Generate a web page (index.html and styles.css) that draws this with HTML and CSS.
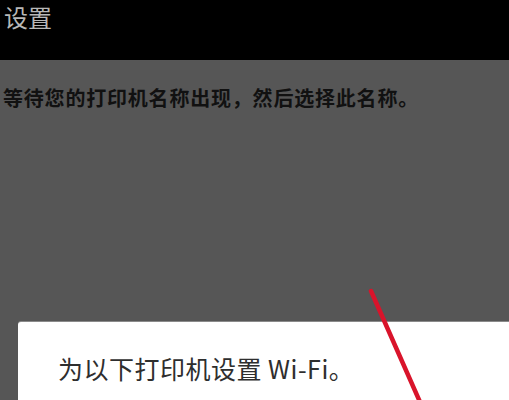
FILE: index.html
```html
<!DOCTYPE html>
<html lang="zh-CN">
<head>
<meta charset="utf-8">
<link rel="stylesheet" href="styles.css">
</head>
<body>
<div class="screen">
  <header class="topbar"><span class="title">设置</span></header>
  <main class="content">
    <p class="hint">等待您的打印机名称出现，然后选择此名称。</p>
    <section class="dialog">
      <p class="dialog-text">为以下打印机设置 Wi-Fi。</p>
    </section>
  </main>
  <svg class="arrow" width="509" height="400" viewBox="0 0 509 400">
    <line x1="371" y1="291" x2="420" y2="402" stroke="#d9142b" stroke-width="4.5" stroke-linecap="round"/>
  </svg>
</div>
</body>
</html>
```
FILE: styles.css
```css
html, body {
  margin: 0;
  padding: 0;
  width: 509px;
  height: 400px;
  overflow: hidden;
  background: #555555;
  font-family: "Noto Sans CJK SC", "Noto Sans", sans-serif;
}
.screen {
  position: relative;
  width: 509px;
  height: 400px;
  display: flex;
  flex-direction: column;
}
.topbar {
  height: 60px;
  background: #000;
  display: flex;
  align-items: flex-start;
  padding: 3px 0 0 4px;
  box-sizing: border-box;
}
.title {
  color: #b8b8b8;
  font-size: 24px;
  line-height: 28px;
}
.content {
  flex: 1;
  background: #565656;
  display: flex;
  flex-direction: column;
}
.hint {
  margin: 24px 0 0 3px;
  font-size: 20px;
  line-height: 28px;
  letter-spacing: 0.8px;
  font-weight: bold;
  color: #111;
  white-space: nowrap;
}
.dialog {
  margin: 210px 0 0 18px;
  flex: 1;
  background: #fff;
  border-top-left-radius: 3px;
  box-shadow: 0 -1px 0 #8a8a8a;
}
.dialog-text {
  margin: 29px 0 0 40px;
  font-size: 25px;
  line-height: 34px;
  letter-spacing: 0.5px;
  color: #2e2e2e;
  white-space: nowrap;
}
.arrow {
  position: absolute;
  left: 0;
  top: 0;
}
```
